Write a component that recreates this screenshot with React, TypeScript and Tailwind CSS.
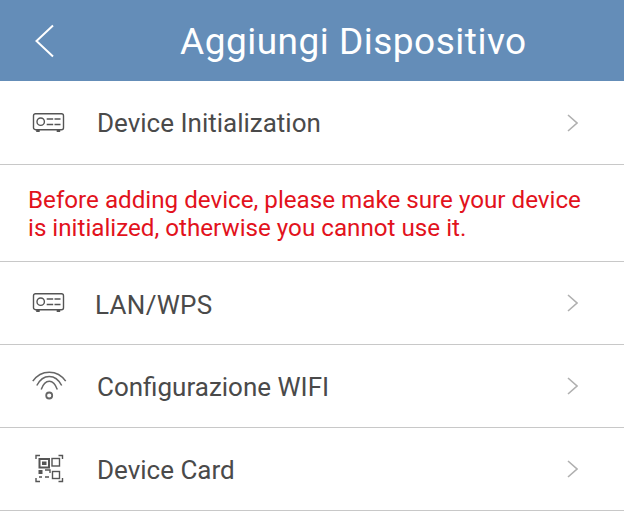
const ProjectorIcon = () => (
  <svg className="shrink-0" width="33" height="20" viewBox="0 0 33 20" fill="none" stroke="#555" strokeWidth="1.4">
    <rect x="1.5" y="0.7" width="30" height="16" rx="2" />
    <circle cx="8.7" cy="8.7" r="3.7" />
    <path d="M14.7 6h6.5M22.5 6h6M14.7 11.5h6.5M22.5 11.5h6" />
    <path d="M4.2 18h3.5M24.7 18h3.5" strokeWidth="2" />
  </svg>
);

const WifiIcon = () => (
  <svg className="shrink-0" width="36" height="30" viewBox="0 0 36 30" fill="none" stroke="#666" strokeWidth="1.5">
    <path d="M1.8 10.2C10 -1.8 26.5 -1.8 34.7 10.2" />
    <path d="M5.8 14.5C12 2.5 24.5 2.5 30.7 14.5" />
    <path d="M10.2 18.5C14 7.5 22.5 7.5 26.3 18.5" />
    <circle cx="18.2" cy="24.5" r="3" strokeWidth="1.8" />
  </svg>
);

const QrIcon = () => (
  <svg className="shrink-0" width="30" height="32" viewBox="0 0 30 32" fill="none" stroke="#555" strokeWidth="1.4">
    <path d="M2 6V2.5h4M24.5 2.5h4V6M2 25v3.5h4M24.5 28.5h4V25" />
    <rect x="5.5" y="6" width="9.5" height="8.5" strokeWidth="2" />
    <rect x="8" y="8.5" width="4.5" height="3.5" fill="#555" stroke="none" />
    <rect x="18" y="5.5" width="7.5" height="7.5" />
    <rect x="4.5" y="17" width="4" height="4" fill="#555" stroke="none" />
    <path d="M11 17h5v3M5 24h3M11 24h4" />
    <rect x="18.5" y="18.5" width="7" height="7" />
  </svg>
);

const Chevron = () => (
  <svg width="11" height="18" viewBox="0 0 11 18" fill="none" stroke="#b0b0b0" strokeWidth="1.6">
    <path d="M1 1l9 8-9 8" />
  </svg>
);

const Row = ({ icon, title, heightClass = "h-[83px]", textClass = "ml-[32px] pt-px" }: { icon: React.ReactNode; title: string; heightClass?: string; textClass?: string }) => (
  <div className={`${heightClass} flex items-center border-b border-[#c8c8c8] pl-[32px] pr-[46px]`}>
    <div className="flex w-[33px] shrink-0 items-center justify-center">{icon}</div>
    <span className={`${textClass} flex-1 text-[26px] leading-none text-[#4a4a4a]`}>{title}</span>
    <Chevron />
  </div>
);

export default function App() {
  return (
    <div className="h-[532px] w-[624px] overflow-hidden bg-white font-['Roboto',sans-serif]">
      <header className="flex h-[81px] items-center bg-[#648db8] pl-[34px] text-white">
        <svg width="21" height="34" viewBox="0 0 21 34" fill="none" stroke="#ffffff" strokeWidth="2">
          <path d="M19 1.5L2.5 17 19 32.5" />
        </svg>
        <h1 className="ml-[125px] pt-[2px] text-[37px] font-normal leading-none tracking-[0.5px]">Aggiungi Dispositivo</h1>
      </header>
      <Row icon={<ProjectorIcon />} title="Device Initialization" heightClass="h-[84px]" />
      <div className="flex h-[97px] items-center border-b border-[#c8c8c8] px-[28px] pt-[1px] text-[24.2px] leading-[28px] text-[#e2121c]">
        <p>
          Before adding device, please make sure your device
          <br />
          is initialized, otherwise you cannot use it.
        </p>
      </div>
      <Row icon={<ProjectorIcon />} title="LAN/WPS" textClass="ml-[30px] pt-[3px] tracking-[0.3px]" />
      <Row icon={<WifiIcon />} title="Configurazione WIFI" />
      <Row icon={<QrIcon />} title="Device Card" />
    </div>
  );
}
